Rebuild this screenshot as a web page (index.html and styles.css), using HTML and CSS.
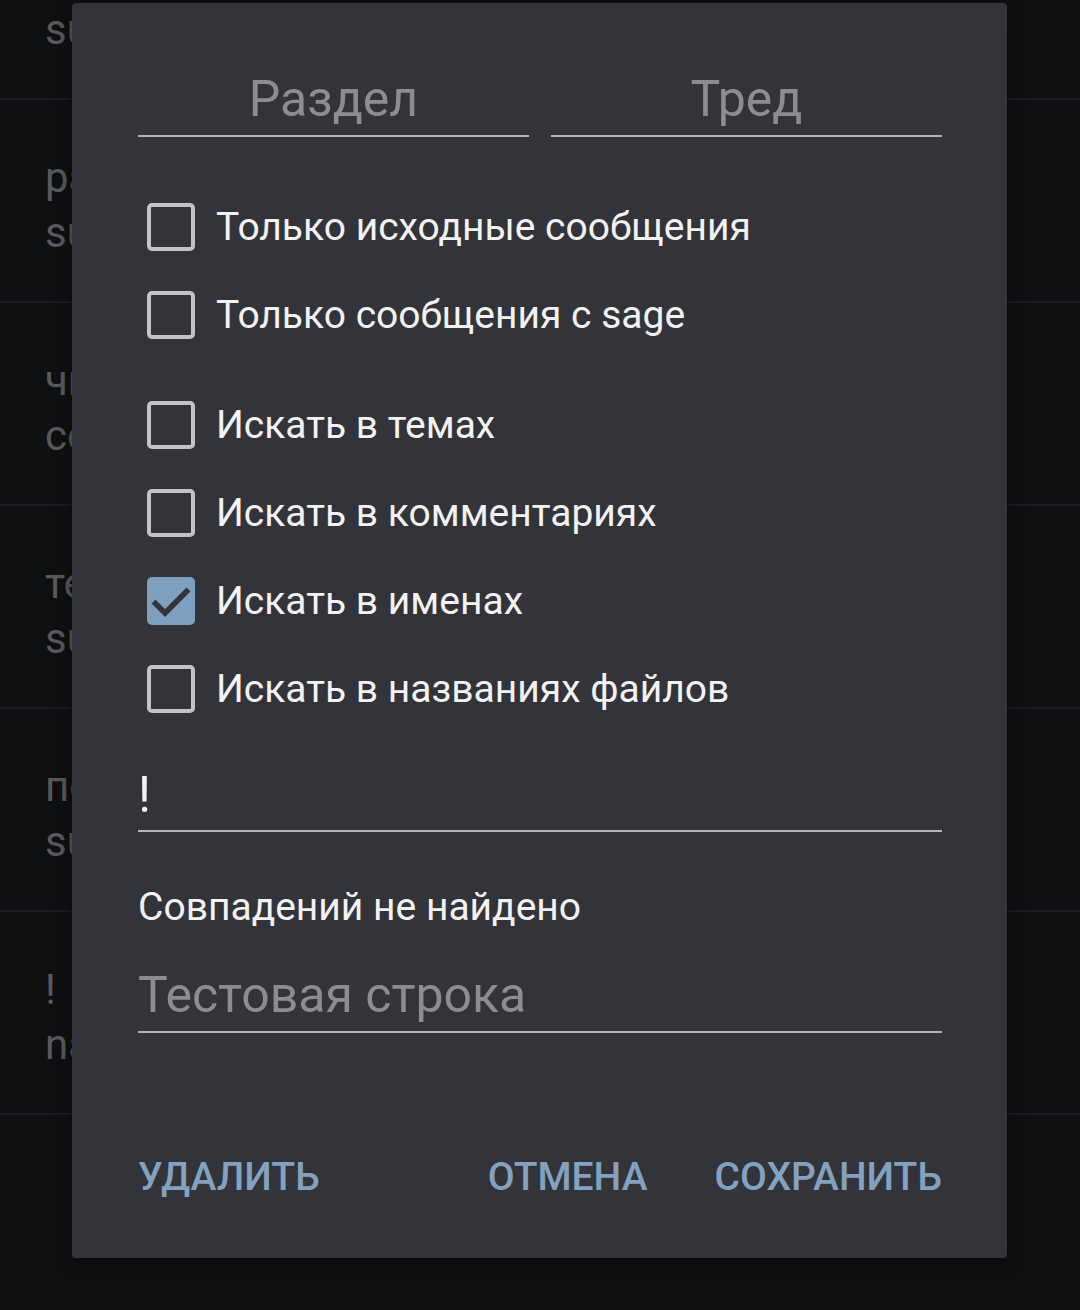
FILE: index.html
```html
<!DOCTYPE html>
<html lang="ru">
<head>
<meta charset="utf-8">
<link rel="stylesheet" href="styles.css">
</head>
<body>
<div class="list">
  <div class="row"><div class="r-title">текст</div><div class="r-sub">subject</div></div>
  <div class="row"><div class="r-title">password</div><div class="r-sub">subject</div></div>
  <div class="row"><div class="r-title">число</div><div class="r-sub">comment</div></div>
  <div class="row"><div class="r-title">тест</div><div class="r-sub">subject</div></div>
  <div class="row"><div class="r-title">поиск</div><div class="r-sub">subject</div></div>
  <div class="row"><div class="r-title">!</div><div class="r-sub">name</div></div>
  <div class="row"></div>
</div>

<div class="dialog">
  <div class="fields">
    <div class="field center placeholder">Раздел</div>
    <div class="field center placeholder">Тред</div>
  </div>

  <div class="checks">
    <div class="group">
      <div class="check"><span class="box"></span><span class="label">Только исходные сообщения</span></div>
      <div class="check"><span class="box"></span><span class="label">Только сообщения с sage</span></div>
    </div>
    <div class="group">
      <div class="check"><span class="box"></span><span class="label">Искать в темах</span></div>
      <div class="check"><span class="box"></span><span class="label">Искать в комментариях</span></div>
      <div class="check"><span class="box checked"><svg viewBox="0 0 48 48" width="48" height="48"><path d="M6.5 24.5 L18 36 L41.5 12.5" fill="none" stroke="#333439" stroke-width="5.5"/></svg></span><span class="label">Искать в именах</span></div>
      <div class="check"><span class="box"></span><span class="label">Искать в названиях файлов</span></div>
    </div>
  </div>

  <div class="field value pattern">!</div>
  <div class="status">Совпадений не найдено</div>
  <div class="field placeholder test">Тестовая строка</div>

  <div class="actions">
    <button class="btn">Удалить</button>
    <div class="spacer"></div>
    <button class="btn">Отмена</button>
    <button class="btn">Сохранить</button>
  </div>
</div>
</body>
</html>
```
FILE: styles.css
```css
html, body {
  margin: 0;
  padding: 0;
}
body {
  width: 1080px;
  height: 1310px;
  overflow: hidden;
  background: #0f1012;
  font-family: Roboto, "Noto Sans", sans-serif;
  position: relative;
}

.list {
  margin-top: -103px;
}
.row {
  border-bottom: 2px solid #1c1d20;
  padding: 50px 0 0 45px;
  box-sizing: border-box;
  height: 203px;
  color: #5a5a5c;
  font-size: 42px;
  line-height: 55px;
}

.dialog {
  position: absolute;
  left: 72px;
  top: 3px;
  width: 935px;
  height: 1255px;
  box-sizing: border-box;
  background: #333439;
  border-radius: 4px;
  padding: 68px 65px 0 66px;
  display: flex;
  flex-direction: column;
  box-shadow: 0 6px 20px rgba(0,0,0,0.4);
}

.fields {
  display: flex;
  gap: 22px;
}
.fields .field {
  flex: 1;
}
.field {
  font-size: 50px;
  line-height: 56px;
  padding-bottom: 8px;
  border-bottom: 2px solid #b6b7bb;
}
.center {
  text-align: center;
}
.placeholder {
  color: #8c8d91;
}
.value {
  color: #f2f2f2;
}

.checks {
  margin-top: 46px;
  display: flex;
  flex-direction: column;
  gap: 22px;
}
.check {
  height: 88px;
  display: flex;
  align-items: center;
  padding-left: 9px;
}
.box {
  width: 48px;
  height: 48px;
  box-sizing: border-box;
  border: 4px solid #c3c3c6;
  border-radius: 5px;
  flex: none;
  position: relative;
}
.box.checked {
  background: #7f9fbf;
  border-color: #7f9fbf;
}
.box.checked svg {
  position: absolute;
  left: -4px;
  top: -4px;
}
.label {
  margin-left: 21px;
  font-size: 39px;
  line-height: 44px;
  color: #f2f2f2;
}

.pattern {
  margin-top: 34px;
  padding-bottom: 7px;
}
.status {
  margin-top: 53px;
  font-size: 39px;
  line-height: 44px;
  color: #f2f2f2;
}
.test {
  margin-top: 38px;
  padding-bottom: 8px;
}

.actions {
  margin-top: 122px;
  display: flex;
  align-items: center;
  gap: 67px;
}
.spacer {
  flex: 1;
}
.actions .spacer + .btn {
  margin-left: -67px;
}
.btn {
  background: none;
  border: none;
  padding: 0;
  margin: 0;
  font-family: Roboto, "Noto Sans", sans-serif;
  font-weight: 500;
  font-size: 39px;
  line-height: 44px;
  text-transform: uppercase;
  color: #84a2c0;
}
```
